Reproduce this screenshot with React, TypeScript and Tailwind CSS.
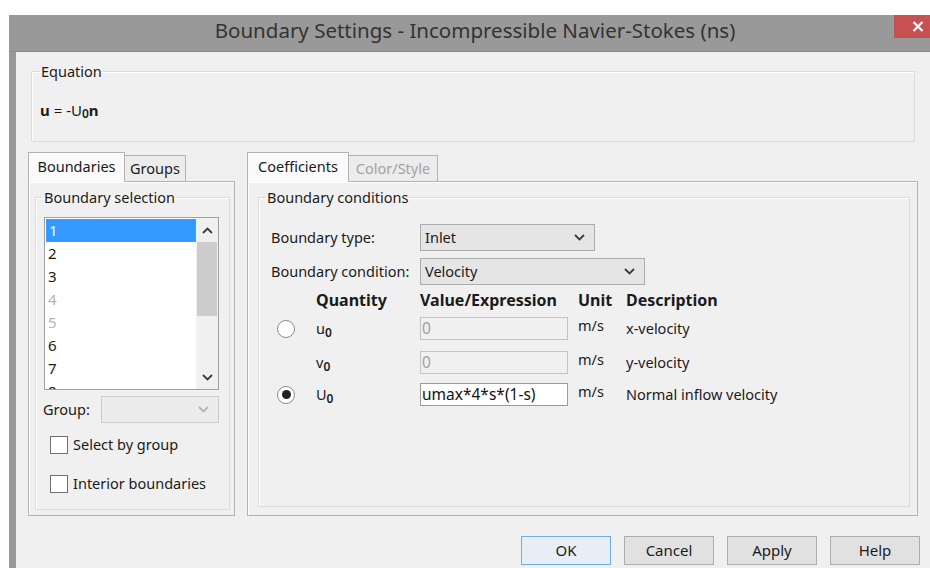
import React from 'react'

const items = [
  { n: '1', selected: true },
  { n: '2' },
  { n: '3' },
  { n: '4', dim: true },
  { n: '5', dim: true },
  { n: '6' },
  { n: '7' },
  { n: '8' },
]

function ChevronDown({ light }: { light?: boolean }) {
  return (
    <svg width="11" height="7" viewBox="0 0 11 7" className="shrink-0">
      <polyline
        points="1,1 5.5,5.5 10,1"
        fill="none"
        stroke={light ? '#b4b4b4' : '#3c3c3c'}
        strokeWidth="1.8"
      />
    </svg>
  )
}

function ChevronUp() {
  return (
    <svg width="11" height="7" viewBox="0 0 11 7">
      <polyline points="1,6 5.5,1.5 10,6" fill="none" stroke="#3c3c3c" strokeWidth="1.8" />
    </svg>
  )
}

function Select({ value, width }: { value: string; width: string }) {
  return (
    <div
      className={`${width} flex h-[27px] items-center justify-between border border-[#acacac] bg-[#e5e5e5] pl-[4px] pr-[9px]`}
    >
      <span>{value}</span>
      <ChevronDown />
    </div>
  )
}

function Checkbox({ label }: { label: string }) {
  return (
    <div className="flex items-center gap-[5px]">
      <div className="h-[18px] w-[18px] border border-[#707070] bg-white" />
      <span>{label}</span>
    </div>
  )
}

function Radio({ checked }: { checked?: boolean }) {
  return (
    <div className="flex h-[18px] w-[18px] items-center justify-center rounded-full border border-[#8a8a8a] bg-white">
      {checked && <div className="h-[9px] w-[9px] rounded-full bg-[#222]" />}
    </div>
  )
}

function Sym({ base }: { base: string }) {
  return (
    <span className="leading-none">
      {base}
      <sub className="relative top-[3px] text-[12px] font-semibold">0</sub>
    </span>
  )
}

function Field({ value, enabled }: { value: string; enabled?: boolean }) {
  return (
    <div
      className={`flex h-[23px] w-[148px] items-center border px-[1px] text-[15.5px] ${
        enabled ? 'border-[#9c9c9c] bg-white text-[#111]' : 'border-[#c4c4c4] bg-[#f0f0f0] text-[#a0a0a0]'
      }`}
    >
      {value}
    </div>
  )
}

const rows = [
  { radio: true, checked: false, sym: 'u', value: '0', enabled: false, desc: 'x-velocity', mt: 'mt-[8px]' },
  { radio: false, checked: false, sym: 'v', value: '0', enabled: false, desc: 'y-velocity', mt: 'mt-[11px]' },
  { radio: true, checked: true, sym: 'U', value: 'umax*4*s*(1-s)', enabled: true, desc: 'Normal inflow velocity', mt: 'mt-[9px]' },
]

export default function App() {
  return (
    <div className="h-[568px] w-[930px] overflow-hidden bg-white font-['Noto_Sans',sans-serif] text-[14.5px] text-[#1b1b1b]">
      <div className="ml-[9px] mt-[15px] flex h-[553px] w-[932px] flex-col bg-[#999999]">
        {/* title bar */}
        <div className="flex h-[37px] shrink-0 items-start border-b border-[#8a8a8a]">
          <div className="w-[47px]" />
          <div className="flex-1 text-center text-[20.5px] text-[#333]">
            Boundary Settings - Incompressible Navier-Stokes (ns)
          </div>
          <div className="flex h-[23px] w-[47px] items-center justify-center bg-[#c75050]">
            <svg width="12" height="11" viewBox="0 0 12 11">
              <path d="M1.5 1 L10.5 10 M10.5 1 L1.5 10" stroke="white" strokeWidth="2.2" />
            </svg>
          </div>
        </div>

        <div className="ml-[7px] flex flex-1 flex-col bg-[#f0f0f0]">
          {/* equation */}
          <fieldset className="ml-[15px] mt-[10px] h-[80px] w-[884px] border border-[#dcdcdc] px-[8px] shadow-[inset_1px_1px_0_#fff]">
            <legend className="px-[1px] leading-[19px]">Equation</legend>
            <div className="mt-[18px] text-[15px]">
              <b>u</b> = -U<sub className="relative top-[2px] text-[12px] font-semibold">0</sub>
              <b>n</b>
            </div>
          </fieldset>

          <div className="mt-[10px] flex">
            {/* boundaries / groups */}
            <div className="ml-[12px] flex w-[207px] flex-col">
              <div className="flex h-[29px] items-end">
                <div className="relative z-10 -mb-px flex h-[30px] w-[97px] items-start justify-center border border-b-0 border-[#b3b3b3] bg-[#fafafa] pt-[3px]">
                  Boundaries
                </div>
                <div className="flex h-[26px] w-[61px] items-center justify-center border border-b-0 border-l-0 border-[#b3b3b3] bg-[#ececec]">
                  Groups
                </div>
              </div>
              <div className="flex h-[335px] flex-col border border-[#b3b3b3] shadow-[inset_1px_1px_0_#fff]">
                <fieldset className="mb-[5px] ml-[6px] mt-[6px] flex w-[195px] flex-1 flex-col border border-[#dcdcdc] px-[7px] shadow-[inset_1px_1px_0_#fff]">
                  <legend className="px-[1px] leading-[19px]">Boundary selection</legend>
                  <div className="ml-[1px] mt-[10px] flex h-[173px] w-[175px] border border-[#a0a0a0] bg-white">
                    <div className="flex-1 overflow-hidden pl-px pt-px text-[15px]">
                      {items.map(it => (
                        <div
                          key={it.n}
                          className={`flex h-[23px] items-center pl-[2px] ${
                            it.selected
                              ? 'border border-dotted border-[#c88a2a] bg-[#3399ff] text-white'
                              : it.dim
                                ? 'text-[#b4b4b4]'
                                : ''
                          }`}
                        >
                          {it.n}
                        </div>
                      ))}
                    </div>
                    <div className="flex w-[22px] flex-col items-center bg-[#f0f0f0]">
                      <div className="flex h-[24px] items-center">
                        <ChevronUp />
                      </div>
                      <div className="h-[74px] w-[20px] bg-[#cdcdcd]" />
                      <div className="flex-1" />
                      <div className="flex h-[24px] items-center">
                        <ChevronDown />
                      </div>
                    </div>
                  </div>
                  <div className="mt-[6px] flex items-center">
                    <span className="w-[58px]">Group:</span>
                    <div className="flex h-[27px] w-[118px] items-center justify-end border border-[#cccccc] bg-[#ececec] pr-[9px]">
                      <ChevronDown light />
                    </div>
                  </div>
                  <div className="ml-[7px] mt-[11px] flex flex-col gap-[17px]">
                    <Checkbox label="Select by group" />
                    <Checkbox label="Interior boundaries" />
                  </div>
                </fieldset>
              </div>
            </div>

            {/* coefficients / color */}
            <div className="ml-[12px] flex w-[671px] flex-col">
              <div className="flex h-[29px] items-end">
                <div className="relative z-10 -mb-px flex h-[30px] w-[102px] items-start justify-center border border-b-0 border-[#b3b3b3] bg-[#fafafa] pt-[3px]">
                  Coefficients
                </div>
                <div className="flex h-[26px] w-[89px] items-center justify-center border border-b-0 border-l-0 border-[#b3b3b3] bg-[#ececec] text-[#a3a3a3]">
                  Color/Style
                </div>
              </div>
              <div className="flex h-[335px] flex-col border border-[#b3b3b3] shadow-[inset_1px_1px_0_#fff]">
                <fieldset className="mb-[8px] ml-[10px] mt-[6px] flex w-[652px] flex-1 flex-col border border-[#dcdcdc] px-[7px] shadow-[inset_1px_1px_0_#fff]">
                  <legend className="px-[1px] leading-[19px]">Boundary conditions</legend>
                  <div className="ml-[5px] flex flex-col">
                    <div className="mt-[17px] flex items-center">
                      <span className="w-[149px]">Boundary type:</span>
                      <Select value="Inlet" width="w-[175px]" />
                    </div>
                    <div className="mt-[7px] flex items-center">
                      <span className="w-[149px]">Boundary condition:</span>
                      <Select value="Velocity" width="w-[225px]" />
                    </div>

                    <div className="mt-[6px] flex h-[18px] items-center text-[16px] font-bold">
                      <span className="ml-[45px] w-[104px]">Quantity</span>
                      <span className="w-[158px]">Value/Expression</span>
                      <span className="w-[48px]">Unit</span>
                      <span>Description</span>
                    </div>

                    {rows.map(r => (
                      <div key={r.sym} className={`${r.mt} flex h-[23px] items-center`}>
                        <div className="flex w-[45px] pl-[6px]">
                          {r.radio && <Radio checked={r.checked} />}
                        </div>
                        <div className="w-[104px] self-start pt-[1px]">
                          <Sym base={r.sym} />
                        </div>
                        <div className="w-[158px]">
                          <Field value={r.value} enabled={r.enabled} />
                        </div>
                        <span className="w-[48px] self-start leading-[17px]">m/s</span>
                        <span>{r.desc}</span>
                      </div>
                    ))}
                  </div>
                </fieldset>
              </div>
            </div>
          </div>

          {/* dialog buttons */}
          <div className="ml-[505px] mt-[20px] flex gap-[13px] text-[15px]">
            {['OK', 'Cancel', 'Apply', 'Help'].map((b, i) => (
              <div
                key={b}
                className={`flex h-[29px] w-[90px] items-center justify-center border ${
                  i === 0 ? 'border-[#6eaee6] bg-[#e8eef5]' : 'border-[#adadad] bg-[#e1e1e1]'
                }`}
              >
                {b}
              </div>
            ))}
          </div>
        </div>
      </div>
    </div>
  )
}
